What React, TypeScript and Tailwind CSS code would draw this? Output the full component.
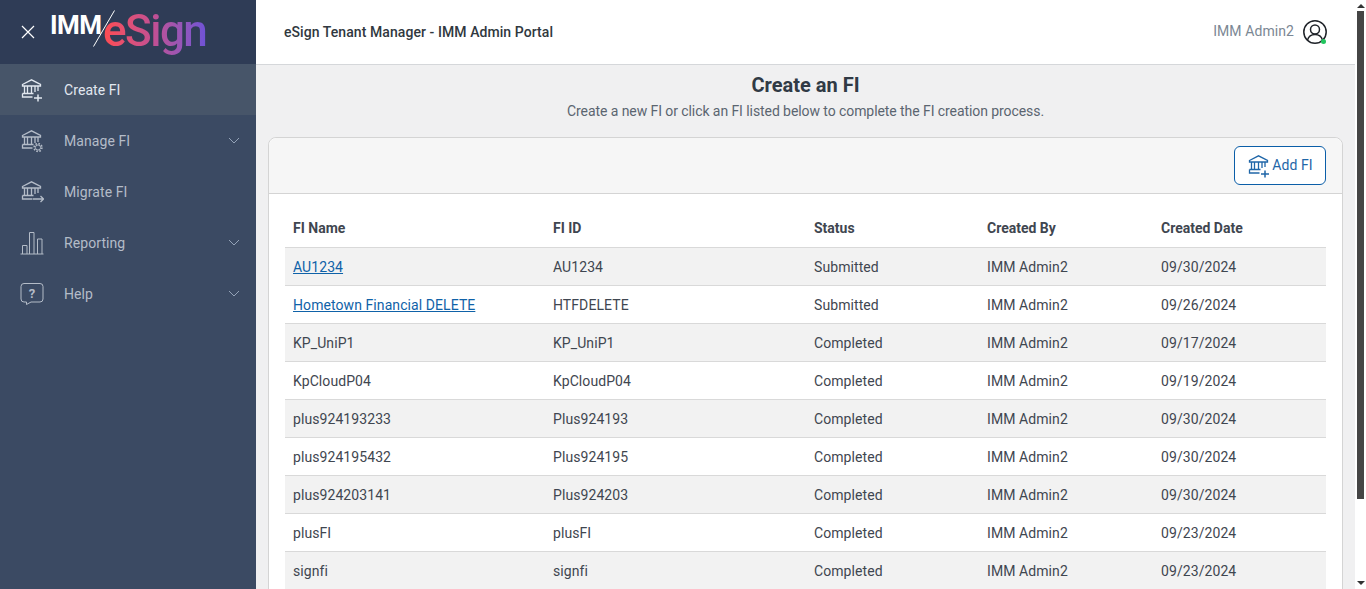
import type { ReactNode } from "react";

const rows = [
  ["AU1234", "AU1234", "Submitted", "09/30/2024"],
  ["Hometown Financial DELETE", "HTFDELETE", "Submitted", "09/26/2024"],
  ["KP_UniP1", "KP_UniP1", "Completed", "09/17/2024"],
  ["KpCloudP04", "KpCloudP04", "Completed", "09/19/2024"],
  ["plus924193233", "Plus924193", "Completed", "09/30/2024"],
  ["plus924195432", "Plus924195", "Completed", "09/30/2024"],
  ["plus924203141", "Plus924203", "Completed", "09/30/2024"],
  ["plusFI", "plusFI", "Completed", "09/23/2024"],
  ["signfi", "signfi", "Completed", "09/23/2024"],
];

// bank building shared by the FI icons, extra strokes go in the corner
function Bank({ className, children }: { className?: string; children?: ReactNode }) {
  return (
    <svg className={className} viewBox="0 0 24 24" fill="none" stroke="currentColor" strokeWidth="1.300">
      <path d="M2.500 6.500 11.500 1.800l9 4.700v1.500h-18z" />
      <path d="M4.500 8v7.500M7.500 8v7.500M11.500 8v7.500M15 8v6M18 8v5" />
      <path d="M2.500 15.500h11M2.500 15.500v3.500h10" />
      {children}
    </svg>
  );
}

function Plus() {
  return <path d="M18 16.500v7M14 20h8" strokeWidth="1.500" />;
}

function Chevron() {
  return (
    <svg className="h-[7px] w-[12px] text-[#94a3b8]" viewBox="0 0 12 7" fill="none" stroke="currentColor" strokeWidth="1">
      <path d="M1 1l5 5 5-5" />
    </svg>
  );
}

function NavItem({ icon, label, active, more }: { icon: ReactNode; label: string; active?: boolean; more?: boolean }) {
  return (
    <div className={`flex h-[51px] items-center pl-[20px] pr-[16px] ${active ? "bg-[#475569] text-[#e2e8f0]" : "text-[#b4bcc8]"}`}>
      <span className="flex w-[44px] shrink-0">{icon}</span>
      <span className="flex-1 pt-[2px] text-[14px] tracking-[0.08px]">{label}</span>
      {more && <Chevron />}
    </div>
  );
}

export default function App() {
  return (
    <div className="flex h-[589px] w-[1366px] overflow-hidden bg-white font-['Roboto',sans-serif] text-[14px] tracking-[0.08px] text-[#3f4650]">
      <aside className="flex w-[256px] shrink-0 flex-col bg-[#3b4a63]">
        <div className="flex h-[64px] items-center bg-[#2f3c56] pl-[21px]">
          <svg className="h-[14px] w-[14px] text-white" viewBox="0 0 14 14" fill="none" stroke="currentColor" strokeWidth="1.200">
            <path d="M1 1l12 12M13 1 1 13" />
          </svg>
          <div className="relative ml-[15px] flex h-[50px] w-[160px] items-start">
            <span className="mt-[3px] text-[26px] leading-[30px] font-bold tracking-[-0.5px] text-white">IMM</span>
            <svg className="absolute top-[3px] left-[43px] h-[37px] w-[22px] text-white" viewBox="0 0 22 37" fill="none" stroke="currentColor">
              <path d="M21.500 0.500 .5 36.500" />
            </svg>
            <span className="absolute top-[-2px] left-[53px] bg-gradient-to-r from-[#ff4b4f] via-[#c04f94] to-[#6f52d6] bg-clip-text text-[44px] leading-[52px] font-medium tracking-[-1.500px] text-transparent">
              eSign
            </span>
          </div>
        </div>
        <NavItem
          active
          label="Create FI"
          icon={
            <Bank className="h-[24px] w-[24px]">
              <Plus />
            </Bank>
          }
        />
        <NavItem
          more
          label="Manage FI"
          icon={
            <Bank className="h-[24px] w-[24px]">
              <circle cx="18" cy="18.500" r="3.900" strokeWidth="1.600" strokeDasharray="1.600 1.450" />
              <circle cx="18" cy="18.500" r="2.600" strokeWidth="1" />
            </Bank>
          }
        />
        <NavItem
          label="Migrate FI"
          icon={
            <Bank className="h-[24px] w-[24px]">
              <path d="M13 19h10.500M20.500 16l3 3-3 3" />
            </Bank>
          }
        />
        <NavItem
          more
          label="Reporting"
          icon={
            <svg className="h-[24px] w-[24px]" viewBox="0 0 24 24" fill="none" stroke="currentColor">
              <path d="M.5 23h23" />
              <path d="M2.500 23v-8.500h4.500V23M9.500 23V1.500H14V23M17.500 23V8h4.500v15" />
            </svg>
          }
        />
        <NavItem
          more
          label="Help"
          icon={
            <svg className="h-[24px] w-[24px]" viewBox="0 0 24 24" fill="none" stroke="currentColor">
              <path d="M4 1.500h16a3 3 0 0 1 3 3v12.500a3 3 0 0 1-3 3H11l-4.500 2.500v-2.500H4a3 3 0 0 1-3-3V4.500a3 3 0 0 1 3-3z" />
              <text x="12" y="15.500" textAnchor="middle" fontSize="13" fontWeight="700" fill="currentColor" stroke="none">
                ?
              </text>
            </svg>
          }
        />
      </aside>

      <main className="flex min-w-0 flex-1 flex-col bg-[#f0f0f1]">
        <header className="flex h-[65px] shrink-0 items-center justify-between border-b border-[#d5d7da] bg-white pr-[28px] pl-[28px]">
          <span className="text-[14px] font-medium tracking-[0.07px] text-[#303840]">eSign Tenant Manager - IMM Admin Portal</span>
          <div className="flex items-center gap-[9px]">
            <span className="pb-[2px] text-[14px] text-[#7b8794]">IMM Admin2</span>
            <span className="relative block h-[24px] w-[24px]">
              <svg className="h-[24px] w-[24px] text-[#1f2329]" viewBox="0 0 24 24" fill="none" stroke="currentColor" strokeWidth="1.500">
                <circle cx="12" cy="12" r="11.200" />
                <circle cx="12" cy="9.500" r="4.500" />
                <path d="M4.500 20c1-3.500 3.500-5.500 7.500-5.500s6.500 2 7.500 5.500" />
              </svg>
              <span className="absolute right-[1px] bottom-[0px] h-[5px] w-[5px] rounded-full bg-[#22c55e]" />
            </span>
          </div>
        </header>

        <div className="flex flex-col items-center pt-[7px] pb-[16px]">
          <h1 className="text-[20px] leading-[26px] font-bold tracking-normal text-[#303a45]">Create an FI</h1>
          <p className="mt-[3px] text-[14px] leading-[20px] tracking-[-0.075px] text-[#5b6570]">
            Create a new FI or click an FI listed below to complete the FI creation process.
          </p>
        </div>

        <section className="ml-[12px] mr-[12px] flex-1 rounded-t-[8px] border border-[#d4d4d4] bg-white">
          <div className="flex h-[56px] items-center justify-end rounded-t-[8px] border-b border-[#d4d4d4] bg-[#f6f6f6] pr-[16px]">
            <button className="flex h-[39px] w-[92px] items-center justify-center gap-[1px] rounded-[6px] border border-[#0b5ea8] bg-white text-[14px] text-[#1f66a8]">
              <Bank className="h-[24px] w-[24px]">
                <Plus />
              </Bank>
              Add FI
            </button>
          </div>
          <div className="px-[16px] pt-[15px]">
            <table className="w-full table-fixed border-collapse text-left">
              <thead>
                <tr className="h-[38px] border-b border-[#d9d9d9]">
                  <th className="w-[260px] pt-[2px] pl-[8px] font-bold tracking-normal">FI Name</th>
                  <th className="w-[261px] pt-[2px] pl-[8px] font-bold tracking-normal">FI ID</th>
                  <th className="w-[173px] pt-[2px] pl-[8px] font-bold tracking-normal">Status</th>
                  <th className="w-[174px] pt-[2px] pl-[8px] font-bold tracking-normal">Created By</th>
                  <th className="pt-[2px] pl-[8px] font-bold tracking-normal">Created Date</th>
                </tr>
              </thead>
              <tbody>
                {rows.map((r, i) => (
                  <tr key={r[0]} className={`h-[38px] border-b border-[#d9d9d9] ${i % 2 === 0 ? "bg-[#f2f2f2]" : "bg-white"}`}>
                    <td className="pt-[2px] pl-[8px]">
                      {i < 2 ? <span className="text-[#0f62a8] underline">{r[0]}</span> : r[0]}
                    </td>
                    <td className="pt-[2px] pl-[8px]">{r[1]}</td>
                    <td className="pt-[2px] pl-[8px]">{r[2]}</td>
                    <td className="pt-[2px] pl-[8px]">IMM Admin2</td>
                    <td className="pt-[2px] pl-[8px]">{r[3]}</td>
                  </tr>
                ))}
              </tbody>
            </table>
          </div>
        </section>
      </main>

      <div className="flex w-[11px] shrink-0 flex-col items-center bg-white px-[2px]">
        <div className="mt-[4px] h-0 w-0 border-x-[4px] border-b-[4px] border-x-transparent border-b-[#333]" />
        <div className="mt-[3px] h-[488px] w-full bg-[#454545]" />
        <div className="mt-auto mb-[4px] h-0 w-0 border-x-[4px] border-t-[4px] border-x-transparent border-t-[#333]" />
      </div>
    </div>
  );
}
